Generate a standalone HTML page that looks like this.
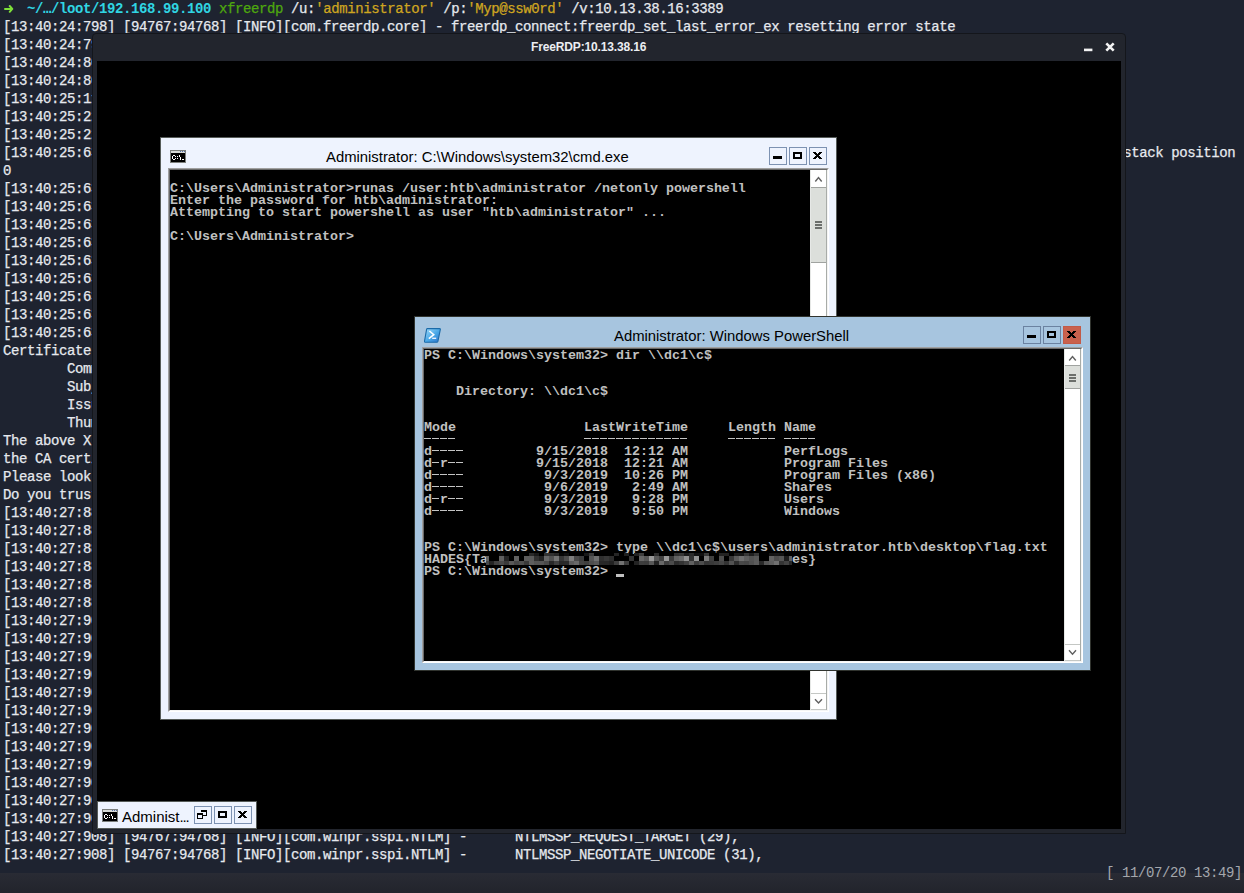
<!DOCTYPE html>
<html><head><meta charset="utf-8">
<style>
*{margin:0;padding:0;box-sizing:border-box}
html,body{width:1244px;height:893px;overflow:hidden;background:#1e2330}
body{position:relative;font-family:"Liberation Mono",monospace}
.a{position:absolute}
.tl{position:absolute;left:3px;height:18px;line-height:18px;font-size:14px;letter-spacing:-0.4px;color:#e6e9ee;white-space:pre;-webkit-text-stroke:0.25px currentColor}
.g{color:#7fd41f}.c{color:#30d5e3;font-weight:bold;-webkit-text-stroke:0}.gr{color:#4ea80e}.y{color:#cfa620}
#status{position:absolute;left:0;top:873px;width:1244px;height:20px;background:linear-gradient(#292b34,#22242c)}
#clock{position:absolute;left:1106px;top:864px;height:18px;line-height:18px;font-size:14px;letter-spacing:-0.4px;color:#a4a7ad;white-space:pre}
#rdp{position:absolute;left:92px;top:33px;width:1034px;height:801px;background:#22252d;border:1px solid #14161b;border-radius:4px 4px 0 0}
#rdptitle{position:absolute;left:0;top:0;width:100%;height:27px;font-family:"Liberation Sans",sans-serif;font-weight:bold;font-size:12px;color:#eceef2;text-align:center;line-height:27px}
#rdpcontent{position:absolute;left:97px;top:61px;width:1024px;height:768px;background:#000;overflow:hidden}
.win{position:absolute;border:1px solid #565b58}
.ttl{position:absolute;font-family:"Liberation Sans",sans-serif;font-size:14.85px;color:#000;white-space:pre;line-height:18px}
.btn{position:absolute;width:18px;height:18px;border:1px solid #7d92b2}
.cframe{position:absolute;border-top:1px solid #a0a0a0;border-left:1px solid #a0a0a0;border-right:1px solid #fff;border-bottom:1px solid #fff}
.cframe2{position:absolute;left:0;top:0;right:0;bottom:0;border-top:1px solid #696969;border-left:1px solid #696969;border-right:1px solid #f4f4f4;border-bottom:1px solid #f4f4f4}
.console{position:absolute;padding-top:1px;background:#000;color:#c0c0c0;font-family:"Liberation Mono",monospace;font-weight:bold;font-size:13.33px;line-height:12px;white-space:pre;overflow:hidden}
.sb{position:absolute;background:#fff;border-left:1px solid #e6e8e6;border-right:1px solid #a8aca8}
.sbb{position:absolute;left:0;width:15px;background:#fff}
.thumb{position:absolute;left:0;width:15px;background:#dcdfdb;border-top:1px solid #a0a3a0;border-bottom:1px solid #a0a3a0}
.mos i{position:absolute;display:block}
.d{color:transparent;display:inline-block;width:8px;height:12px;vertical-align:top;background:linear-gradient(#c4c4c4,#c4c4c4) 0 4px/7px 1px no-repeat}
</style></head><body>
<div class="tl" style="top:0px"><span class="g"> </span>  <span class="c">~/…/loot/192.168.99.100</span> <span class="gr">xfreerdp</span> /u:<span class="y">'administrator'</span> /p:<span class="y">'Myp@ssw0rd'</span> /v:10.13.38.16:3389</div>
<div class="tl" style="top:18px">[13:40:24:798] [94767:94768] [INFO][com.freerdp.core] - freerdp_connect:freerdp_set_last_error_ex resetting error state</div>
<div class="tl" style="top:36px">[13:40:24:799]</div>
<div class="tl" style="top:54px">[13:40:24:800]</div>
<div class="tl" style="top:72px">[13:40:24:800]</div>
<div class="tl" style="top:90px">[13:40:25:117]</div>
<div class="tl" style="top:108px">[13:40:25:228]</div>
<div class="tl" style="top:126px">[13:40:25:229]</div>
<div class="tl" style="top:144px">[13:40:25:636]                                                                                                                              stack position</div>
<div class="tl" style="top:162px">0</div>
<div class="tl" style="top:180px">[13:40:25:636]</div>
<div class="tl" style="top:198px">[13:40:25:636]</div>
<div class="tl" style="top:216px">[13:40:25:636]</div>
<div class="tl" style="top:234px">[13:40:25:636]</div>
<div class="tl" style="top:252px">[13:40:25:636]</div>
<div class="tl" style="top:270px">[13:40:25:636]</div>
<div class="tl" style="top:288px">[13:40:25:636]</div>
<div class="tl" style="top:306px">[13:40:25:636]</div>
<div class="tl" style="top:324px">[13:40:25:636]</div>
<div class="tl" style="top:342px">Certificate details for 10.13.38.16:3389 (RDP-Server):</div>
<div class="tl" style="top:360px">        Common Name: dc1.htb.local</div>
<div class="tl" style="top:378px">        Subject:     CN = dc1.htb.local</div>
<div class="tl" style="top:396px">        Issuer:      CN = dc1.htb.local</div>
<div class="tl" style="top:414px">        Thumbprint:  8a:1f</div>
<div class="tl" style="top:432px">The above X.509 certificate could not be verified</div>
<div class="tl" style="top:450px">the CA certificate in your certificate store</div>
<div class="tl" style="top:468px">Please look at the OpenSSL documentation</div>
<div class="tl" style="top:486px">Do you trust the above certificate? (Y/T/N) Y</div>
<div class="tl" style="top:504px">[13:40:27:884]</div>
<div class="tl" style="top:522px">[13:40:27:884]</div>
<div class="tl" style="top:540px">[13:40:27:884]</div>
<div class="tl" style="top:558px">[13:40:27:884]</div>
<div class="tl" style="top:576px">[13:40:27:884]</div>
<div class="tl" style="top:594px">[13:40:27:884]</div>
<div class="tl" style="top:612px">[13:40:27:907]</div>
<div class="tl" style="top:630px">[13:40:27:907]</div>
<div class="tl" style="top:648px">[13:40:27:907]</div>
<div class="tl" style="top:666px">[13:40:27:907]</div>
<div class="tl" style="top:684px">[13:40:27:907]</div>
<div class="tl" style="top:702px">[13:40:27:907]</div>
<div class="tl" style="top:720px">[13:40:27:907]</div>
<div class="tl" style="top:738px">[13:40:27:907]</div>
<div class="tl" style="top:756px">[13:40:27:907]</div>
<div class="tl" style="top:774px">[13:40:27:907]</div>
<div class="tl" style="top:792px">[13:40:27:907]</div>
<div class="tl" style="top:810px">[13:40:27:907]</div>
<div class="tl" style="top:828px">[13:40:27:908] [94767:94768] [INFO][com.winpr.sspi.NTLM] -      NTLMSSP_REQUEST_TARGET (29),</div>
<div class="tl" style="top:846px">[13:40:27:908] [94767:94768] [INFO][com.winpr.sspi.NTLM] -      NTLMSSP_NEGOTIATE_UNICODE (31),</div>
<div id="status"></div>
<svg class="a" style="left:0;top:0" width="20" height="18" viewBox="0 0 20 18"><path d="M5 8.9H11.5M9.7 6L12.3 8.9L9.7 11.8" fill="none" stroke="#7ee03a" stroke-width="2" stroke-linecap="round" stroke-linejoin="round"/></svg>
<div id="clock">[ 11/07/20 13:49]</div>

<div id="rdp"></div><div class="a" style="left:531px;top:34px;height:27px;line-height:27px;font-family:'Liberation Sans',sans-serif;font-weight:bold;font-size:12px;letter-spacing:-0.15px;color:#eceef2;white-space:pre">FreeRDP:10.13.38.16</div>
<svg class="a" style="left:1080px;top:44px" width="16" height="10"><rect x="4" y="4.6" width="8.4" height="2.6" fill="#f2f2f2"/></svg>
<svg class="a" style="left:1105px;top:42px" width="10" height="10" viewBox="0 0 10 10"><path d="M1.3 1.3L8.7 8.7M8.7 1.3L1.3 8.7" stroke="#f2f2f2" stroke-width="2.6"/></svg>
<div id="rdpcontent"></div>

<!-- CMD window -->
<div class="win" style="left:160px;top:137px;width:677px;height:583px;background:#eef3fe"></div>
<svg class="a" style="left:170px;top:150px" width="16" height="13" viewBox="0 0 16 13" shape-rendering="crispEdges"><rect x="0" y="0" width="16" height="13" fill="#7c7f7c"/><rect x="1" y="1" width="14" height="2" fill="#d6d9d6"/><rect x="10" y="1" width="1" height="1" fill="#5570a8"/><rect x="12" y="1" width="1" height="1" fill="#5570a8"/><rect x="14" y="1" width="1" height="1" fill="#5570a8"/><rect x="1" y="3" width="14" height="9" fill="#000"/><g fill="#fff"><rect x="3" y="5" width="1" height="1"/><rect x="4" y="5" width="1" height="1"/><rect x="2" y="6" width="1" height="1"/><rect x="5" y="6" width="1" height="1"/><rect x="2" y="7" width="1" height="1"/><rect x="2" y="8" width="1" height="1"/><rect x="5" y="8" width="1" height="1"/><rect x="3" y="9" width="1" height="1"/><rect x="4" y="9" width="1" height="1"/><rect x="7" y="6" width="1" height="1"/><rect x="7" y="8" width="1" height="1"/><rect x="9" y="5" width="1" height="1"/><rect x="9" y="6" width="1" height="1"/><rect x="10" y="7" width="1" height="1"/><rect x="10" y="8" width="1" height="1"/><rect x="10" y="9" width="1" height="1"/><rect x="12" y="9" width="1" height="1"/><rect x="13" y="9" width="1" height="1"/></g></svg>
<div class="ttl" style="left:326px;top:148px">Administrator: C:\Windows\system32\cmd.exe</div>
<div class="btn" style="left:769px;top:147px"></div>
<div class="btn" style="left:789px;top:147px"></div>
<div class="btn" style="left:809px;top:147px"></div>
<div class="a" style="left:773px;top:156px;width:9px;height:3px;background:#000"></div>
<div class="a" style="left:793px;top:152px;width:9px;height:7px;border:2px solid #000"></div>
<svg class="a" style="left:813px;top:152px" width="9" height="7" viewBox="0 0 9 7" shape-rendering="crispEdges"><g fill="#000"><rect x="0" y="0" width="3" height="1"/><rect x="6" y="0" width="3" height="1"/><rect x="1" y="1" width="3" height="1"/><rect x="5" y="1" width="3" height="1"/><rect x="2" y="2" width="5" height="1"/><rect x="3" y="3" width="3" height="1"/><rect x="2" y="4" width="5" height="1"/><rect x="1" y="5" width="3" height="1"/><rect x="5" y="5" width="3" height="1"/><rect x="0" y="6" width="3" height="1"/><rect x="6" y="6" width="3" height="1"/></g></svg>
<div class="cframe" style="left:168px;top:168px;width:661px;height:544px"><div class="cframe2"></div></div>
<div class="console" style="left:170px;top:170px;width:640px;height:540px">
C:\Users\Administrator&gt;runas /user:htb\administrator /netonly powershell
Enter the password for htb\administrator:
Attempting to start powershell as user &quot;htb\administrator&quot; ...

C:\Users\Administrator&gt;</div>
<div class="sb" style="left:810px;top:170px;width:17px;height:540px">
  <div class="sbb" style="top:0;height:16px"></div>
  <div class="thumb" style="top:17px;height:76px"></div>
  <div class="sbb" style="top:523px;height:17px;border-top:1px solid #c4c7c4;border-bottom:1px solid #c4c7c4"></div>
</div>
<svg class="a" style="left:0;top:0" width="1244" height="893"><path d="M815.3 181.5 L818.5 177.5 L821.7 181.5" fill="none" stroke="#606060" stroke-width="1.4"/><path d="M815 699.2 L818.5 703 L822 699.2" fill="none" stroke="#606060" stroke-width="1.4"/></svg><div class="a" style="left:815px;top:221px;width:7px;height:2px;background:#6c6f6c"></div><div class="a" style="left:815px;top:224px;width:7px;height:2px;background:#6c6f6c"></div><div class="a" style="left:815px;top:227px;width:7px;height:2px;background:#6c6f6c"></div>

<!-- PS window -->
<div class="win" style="left:414px;top:316px;width:677px;height:355px;background:#a7c5df;border-color:#30332e"></div>
<svg class="a" style="left:424px;top:328px" width="17" height="15" viewBox="0 0 17 15"><defs><linearGradient id="pg" x1="0" y1="0" x2="1" y2="1"><stop offset="0" stop-color="#a6defa"/><stop offset="0.55" stop-color="#47a6e6"/><stop offset="1" stop-color="#2a6fc8"/></linearGradient></defs><path d="M3.2 0.6 H15.6 Q16.6 0.6 16.3 1.6 L13.9 13.4 Q13.7 14.2 12.8 14.2 H1.2 Q0.2 14.2 0.5 13.2 L2.6 1.4 Q2.8 0.6 3.2 0.6Z" fill="url(#pg)" stroke="#1b6aa8" stroke-width="1.1"/><path d="M5.4 3 L9.8 6.7 L4.8 10.6" fill="none" stroke="#fff" stroke-width="1.5"/><rect x="8.2" y="9.6" width="4" height="1.4" fill="#e8f2ff"/></svg>
<div class="ttl" style="left:614px;top:327px">Administrator: Windows PowerShell</div>
<div class="btn" style="left:1023px;top:326px;border-color:#6b82a0"></div>
<div class="btn" style="left:1043px;top:326px;border-color:#6b82a0"></div>
<div class="a" style="left:1063px;top:326px;width:18px;height:18px;background:#c9614d;border:1px solid #c25a47"></div>
<div class="a" style="left:1027px;top:335px;width:9px;height:3px;background:#000"></div>
<div class="a" style="left:1047px;top:331px;width:9px;height:7px;border:2px solid #000"></div>
<svg class="a" style="left:1067px;top:331px" width="9" height="7" viewBox="0 0 9 7" shape-rendering="crispEdges"><g fill="#000"><rect x="0" y="0" width="3" height="1"/><rect x="6" y="0" width="3" height="1"/><rect x="1" y="1" width="3" height="1"/><rect x="5" y="1" width="3" height="1"/><rect x="2" y="2" width="5" height="1"/><rect x="3" y="3" width="3" height="1"/><rect x="2" y="4" width="5" height="1"/><rect x="1" y="5" width="3" height="1"/><rect x="5" y="5" width="3" height="1"/><rect x="0" y="6" width="3" height="1"/><rect x="6" y="6" width="3" height="1"/></g></svg>
<div class="cframe" style="left:422px;top:347px;width:661px;height:316px"><div class="cframe2"></div></div>
<div class="console" style="left:424px;top:349px;width:640px;height:312px">PS C:\Windows\system32&gt; dir \\dc1\c$


    Directory: \\dc1\c$


Mode                LastWriteTime     Length Name
<span class="d">-</span><span class="d">-</span><span class="d">-</span><span class="d">-</span>                <span class="d">-</span><span class="d">-</span><span class="d">-</span><span class="d">-</span><span class="d">-</span><span class="d">-</span><span class="d">-</span><span class="d">-</span><span class="d">-</span><span class="d">-</span><span class="d">-</span><span class="d">-</span><span class="d">-</span>     <span class="d">-</span><span class="d">-</span><span class="d">-</span><span class="d">-</span><span class="d">-</span><span class="d">-</span> <span class="d">-</span><span class="d">-</span><span class="d">-</span><span class="d">-</span>
d<span class="d">-</span><span class="d">-</span><span class="d">-</span><span class="d">-</span>         9/15/2018  12:12 AM            PerfLogs
d<span class="d">-</span>r<span class="d">-</span><span class="d">-</span>         9/15/2018  12:21 AM            Program Files
d<span class="d">-</span><span class="d">-</span><span class="d">-</span><span class="d">-</span>          9/3/2019  10:26 PM            Program Files (x86)
d<span class="d">-</span><span class="d">-</span><span class="d">-</span><span class="d">-</span>          9/6/2019   2:49 AM            Shares
d<span class="d">-</span>r<span class="d">-</span><span class="d">-</span>          9/3/2019   9:28 PM            Users
d<span class="d">-</span><span class="d">-</span><span class="d">-</span><span class="d">-</span>          9/3/2019   9:50 PM            Windows


PS C:\Windows\system32&gt; type \\dc1\c$\users\administrator.htb\desktop\flag.txt
HADES{Ta                                      es}
PS C:\Windows\system32&gt; </div>
<div class="a" style="left:616px;top:574px;width:8px;height:3px;background:#c0c0c0"></div>
<div class="sb" style="left:1064px;top:349px;width:17px;height:312px">
  <div class="sbb" style="top:0;height:16px"></div>
  <div class="thumb" style="top:16px;height:24px"></div>
  <div class="sbb" style="top:295px;height:17px;border-top:1px solid #c4c7c4;border-bottom:1px solid #c4c7c4"></div>
</div>
<svg class="a" style="left:0;top:0" width="1244" height="893"><path d="M1069.2 360.5 L1072.5 356.5 L1075.8 360.5" fill="none" stroke="#606060" stroke-width="1.4"/><path d="M1069 650.2 L1072.5 654.2 L1076 650.2" fill="none" stroke="#606060" stroke-width="1.4"/></svg><div class="a" style="left:1069px;top:374px;width:7px;height:2px;background:#6c6f6c"></div><div class="a" style="left:1069px;top:377px;width:7px;height:2px;background:#6c6f6c"></div><div class="a" style="left:1069px;top:380px;width:7px;height:2px;background:#6c6f6c"></div>
<div class="mos"><i style="left:486px;top:556px;width:3px;height:5px;background:rgb(98,98,98)"></i><i style="left:486px;top:561px;width:3px;height:4px;background:rgb(70,70,70)"></i><i style="left:489px;top:561px;width:5px;height:4px;background:rgb(36,36,36)"></i><i style="left:494px;top:561px;width:5px;height:4px;background:rgb(65,65,65)"></i><i style="left:499px;top:553px;width:5px;height:3px;background:rgb(16,16,16)"></i><i style="left:499px;top:556px;width:5px;height:5px;background:rgb(96,96,96)"></i><i style="left:499px;top:561px;width:5px;height:4px;background:rgb(73,73,73)"></i><i style="left:504px;top:556px;width:5px;height:5px;background:rgb(36,36,36)"></i><i style="left:504px;top:561px;width:5px;height:4px;background:rgb(58,58,58)"></i><i style="left:509px;top:561px;width:5px;height:4px;background:rgb(89,89,89)"></i><i style="left:514px;top:556px;width:5px;height:5px;background:rgb(97,97,97)"></i><i style="left:514px;top:561px;width:5px;height:4px;background:rgb(71,71,71)"></i><i style="left:519px;top:561px;width:5px;height:4px;background:rgb(79,79,79)"></i><i style="left:524px;top:556px;width:5px;height:5px;background:rgb(92,92,92)"></i><i style="left:524px;top:561px;width:5px;height:4px;background:rgb(58,58,58)"></i><i style="left:529px;top:553px;width:5px;height:3px;background:rgb(41,41,41)"></i><i style="left:529px;top:556px;width:5px;height:5px;background:rgb(91,91,91)"></i><i style="left:529px;top:561px;width:5px;height:4px;background:rgb(94,94,94)"></i><i style="left:534px;top:553px;width:5px;height:3px;background:rgb(25,25,25)"></i><i style="left:534px;top:556px;width:5px;height:5px;background:rgb(49,49,49)"></i><i style="left:534px;top:561px;width:5px;height:4px;background:rgb(84,84,84)"></i><i style="left:539px;top:556px;width:5px;height:5px;background:rgb(34,34,34)"></i><i style="left:539px;top:561px;width:5px;height:4px;background:rgb(85,85,85)"></i><i style="left:544px;top:553px;width:5px;height:3px;background:rgb(51,51,51)"></i><i style="left:544px;top:556px;width:5px;height:5px;background:rgb(103,103,103)"></i><i style="left:544px;top:561px;width:5px;height:4px;background:rgb(73,73,73)"></i><i style="left:549px;top:553px;width:5px;height:3px;background:rgb(49,49,49)"></i><i style="left:549px;top:556px;width:5px;height:5px;background:rgb(83,83,83)"></i><i style="left:549px;top:561px;width:5px;height:4px;background:rgb(40,40,40)"></i><i style="left:554px;top:553px;width:5px;height:3px;background:rgb(39,39,39)"></i><i style="left:554px;top:556px;width:5px;height:5px;background:rgb(117,117,117)"></i><i style="left:554px;top:561px;width:5px;height:4px;background:rgb(63,63,63)"></i><i style="left:559px;top:553px;width:5px;height:3px;background:rgb(7,7,7)"></i><i style="left:559px;top:556px;width:5px;height:5px;background:rgb(55,55,55)"></i><i style="left:559px;top:561px;width:5px;height:4px;background:rgb(40,40,40)"></i><i style="left:564px;top:553px;width:5px;height:3px;background:rgb(16,16,16)"></i><i style="left:564px;top:556px;width:5px;height:5px;background:rgb(77,77,77)"></i><i style="left:564px;top:561px;width:5px;height:4px;background:rgb(42,42,42)"></i><i style="left:569px;top:556px;width:5px;height:5px;background:rgb(126,126,126)"></i><i style="left:569px;top:561px;width:5px;height:4px;background:rgb(93,93,93)"></i><i style="left:574px;top:556px;width:5px;height:5px;background:rgb(74,74,74)"></i><i style="left:574px;top:561px;width:5px;height:4px;background:rgb(105,105,105)"></i><i style="left:579px;top:556px;width:5px;height:5px;background:rgb(62,62,62)"></i><i style="left:579px;top:561px;width:5px;height:4px;background:rgb(68,68,68)"></i><i style="left:584px;top:553px;width:5px;height:3px;background:rgb(24,24,24)"></i><i style="left:584px;top:561px;width:5px;height:4px;background:rgb(62,62,62)"></i><i style="left:589px;top:553px;width:5px;height:3px;background:rgb(58,58,58)"></i><i style="left:589px;top:556px;width:5px;height:5px;background:rgb(86,86,86)"></i><i style="left:589px;top:561px;width:5px;height:4px;background:rgb(78,78,78)"></i><i style="left:594px;top:556px;width:5px;height:5px;background:rgb(112,112,112)"></i><i style="left:594px;top:561px;width:5px;height:4px;background:rgb(87,87,87)"></i><i style="left:599px;top:556px;width:5px;height:5px;background:rgb(47,47,47)"></i><i style="left:599px;top:561px;width:5px;height:4px;background:rgb(40,40,40)"></i><i style="left:604px;top:556px;width:5px;height:5px;background:rgb(55,55,55)"></i><i style="left:604px;top:561px;width:5px;height:4px;background:rgb(39,39,39)"></i><i style="left:609px;top:556px;width:5px;height:5px;background:rgb(46,46,46)"></i><i style="left:609px;top:561px;width:5px;height:4px;background:rgb(34,34,34)"></i><i style="left:614px;top:553px;width:5px;height:3px;background:rgb(37,37,37)"></i><i style="left:614px;top:561px;width:5px;height:4px;background:rgb(61,61,61)"></i><i style="left:619px;top:561px;width:5px;height:4px;background:rgb(114,114,114)"></i><i style="left:624px;top:553px;width:5px;height:3px;background:rgb(32,32,32)"></i><i style="left:624px;top:561px;width:5px;height:4px;background:rgb(61,61,61)"></i><i style="left:629px;top:556px;width:5px;height:5px;background:rgb(54,54,54)"></i><i style="left:634px;top:553px;width:5px;height:3px;background:rgb(34,34,34)"></i><i style="left:634px;top:561px;width:5px;height:4px;background:rgb(35,35,35)"></i><i style="left:639px;top:553px;width:5px;height:3px;background:rgb(62,62,62)"></i><i style="left:639px;top:556px;width:5px;height:5px;background:rgb(103,103,103)"></i><i style="left:639px;top:561px;width:5px;height:4px;background:rgb(62,62,62)"></i><i style="left:644px;top:556px;width:5px;height:5px;background:rgb(88,88,88)"></i><i style="left:644px;top:561px;width:5px;height:4px;background:rgb(60,60,60)"></i><i style="left:649px;top:556px;width:5px;height:5px;background:rgb(151,151,151)"></i><i style="left:649px;top:561px;width:5px;height:4px;background:rgb(88,88,88)"></i><i style="left:654px;top:553px;width:5px;height:3px;background:rgb(43,43,43)"></i><i style="left:654px;top:556px;width:5px;height:5px;background:rgb(87,87,87)"></i><i style="left:654px;top:561px;width:5px;height:4px;background:rgb(35,35,35)"></i><i style="left:659px;top:556px;width:5px;height:5px;background:rgb(65,65,65)"></i><i style="left:659px;top:561px;width:5px;height:4px;background:rgb(104,104,104)"></i><i style="left:664px;top:556px;width:5px;height:5px;background:rgb(152,152,152)"></i><i style="left:664px;top:561px;width:5px;height:4px;background:rgb(62,62,62)"></i><i style="left:669px;top:556px;width:5px;height:5px;background:rgb(59,59,59)"></i><i style="left:669px;top:561px;width:5px;height:4px;background:rgb(75,75,75)"></i><i style="left:674px;top:553px;width:5px;height:3px;background:rgb(49,49,49)"></i><i style="left:674px;top:556px;width:5px;height:5px;background:rgb(98,98,98)"></i><i style="left:674px;top:561px;width:5px;height:4px;background:rgb(43,43,43)"></i><i style="left:679px;top:553px;width:5px;height:3px;background:rgb(54,54,54)"></i><i style="left:679px;top:556px;width:5px;height:5px;background:rgb(108,108,108)"></i><i style="left:679px;top:561px;width:5px;height:4px;background:rgb(51,51,51)"></i><i style="left:684px;top:553px;width:5px;height:3px;background:rgb(27,27,27)"></i><i style="left:684px;top:556px;width:5px;height:5px;background:rgb(146,146,146)"></i><i style="left:684px;top:561px;width:5px;height:4px;background:rgb(64,64,64)"></i><i style="left:689px;top:553px;width:5px;height:3px;background:rgb(42,42,42)"></i><i style="left:689px;top:556px;width:5px;height:5px;background:rgb(50,50,50)"></i><i style="left:689px;top:561px;width:5px;height:4px;background:rgb(97,97,97)"></i><i style="left:694px;top:553px;width:5px;height:3px;background:rgb(17,17,17)"></i><i style="left:694px;top:556px;width:5px;height:5px;background:rgb(149,149,149)"></i><i style="left:694px;top:561px;width:5px;height:4px;background:rgb(61,61,61)"></i><i style="left:699px;top:553px;width:5px;height:3px;background:rgb(16,16,16)"></i><i style="left:699px;top:561px;width:5px;height:4px;background:rgb(77,77,77)"></i><i style="left:704px;top:553px;width:5px;height:3px;background:rgb(56,56,56)"></i><i style="left:704px;top:556px;width:5px;height:5px;background:rgb(124,124,124)"></i><i style="left:704px;top:561px;width:5px;height:4px;background:rgb(53,53,53)"></i><i style="left:709px;top:556px;width:5px;height:5px;background:rgb(63,63,63)"></i><i style="left:709px;top:561px;width:5px;height:4px;background:rgb(56,56,56)"></i><i style="left:714px;top:561px;width:5px;height:4px;background:rgb(61,61,61)"></i><i style="left:719px;top:553px;width:5px;height:3px;background:rgb(36,36,36)"></i><i style="left:719px;top:556px;width:5px;height:5px;background:rgb(79,79,79)"></i><i style="left:719px;top:561px;width:5px;height:4px;background:rgb(69,69,69)"></i><i style="left:724px;top:553px;width:5px;height:3px;background:rgb(34,34,34)"></i><i style="left:724px;top:561px;width:5px;height:4px;background:rgb(51,51,51)"></i><i style="left:729px;top:556px;width:5px;height:5px;background:rgb(56,56,56)"></i><i style="left:729px;top:561px;width:5px;height:4px;background:rgb(82,82,82)"></i><i style="left:734px;top:553px;width:5px;height:3px;background:rgb(26,26,26)"></i><i style="left:734px;top:556px;width:5px;height:5px;background:rgb(90,90,90)"></i><i style="left:734px;top:561px;width:5px;height:4px;background:rgb(45,45,45)"></i><i style="left:739px;top:553px;width:5px;height:3px;background:rgb(23,23,23)"></i><i style="left:739px;top:556px;width:5px;height:5px;background:rgb(111,111,111)"></i><i style="left:739px;top:561px;width:5px;height:4px;background:rgb(72,72,72)"></i><i style="left:744px;top:553px;width:5px;height:3px;background:rgb(54,54,54)"></i><i style="left:744px;top:556px;width:5px;height:5px;background:rgb(95,95,95)"></i><i style="left:744px;top:561px;width:5px;height:4px;background:rgb(69,69,69)"></i><i style="left:749px;top:553px;width:5px;height:3px;background:rgb(31,31,31)"></i><i style="left:749px;top:556px;width:5px;height:5px;background:rgb(83,83,83)"></i><i style="left:749px;top:561px;width:5px;height:4px;background:rgb(80,80,80)"></i><i style="left:754px;top:553px;width:5px;height:3px;background:rgb(57,57,57)"></i><i style="left:754px;top:556px;width:5px;height:5px;background:rgb(90,90,90)"></i><i style="left:754px;top:561px;width:5px;height:4px;background:rgb(91,91,91)"></i><i style="left:759px;top:561px;width:5px;height:4px;background:rgb(41,41,41)"></i><i style="left:764px;top:561px;width:5px;height:4px;background:rgb(86,86,86)"></i><i style="left:769px;top:553px;width:5px;height:3px;background:rgb(18,18,18)"></i><i style="left:769px;top:556px;width:5px;height:5px;background:rgb(99,99,99)"></i><i style="left:769px;top:561px;width:5px;height:4px;background:rgb(95,95,95)"></i><i style="left:774px;top:553px;width:5px;height:3px;background:rgb(22,22,22)"></i><i style="left:774px;top:556px;width:5px;height:5px;background:rgb(77,77,77)"></i><i style="left:774px;top:561px;width:5px;height:4px;background:rgb(112,112,112)"></i><i style="left:779px;top:553px;width:5px;height:3px;background:rgb(18,18,18)"></i><i style="left:779px;top:556px;width:5px;height:5px;background:rgb(86,86,86)"></i><i style="left:779px;top:561px;width:5px;height:4px;background:rgb(52,52,52)"></i><i style="left:784px;top:556px;width:5px;height:5px;background:rgb(28,28,28)"></i><i style="left:784px;top:561px;width:5px;height:4px;background:rgb(66,66,66)"></i><i style="left:789px;top:556px;width:3px;height:5px;background:rgb(96,96,96)"></i><i style="left:789px;top:561px;width:3px;height:4px;background:rgb(40,40,40)"></i></div>

<!-- minimized -->
<div class="win" style="left:97px;top:801px;width:160px;height:28px;background:#eef3fe"></div>
<svg class="a" style="left:102px;top:809px" width="16" height="13" viewBox="0 0 16 13" shape-rendering="crispEdges"><rect x="0" y="0" width="16" height="13" fill="#7c7f7c"/><rect x="1" y="1" width="14" height="2" fill="#d6d9d6"/><rect x="10" y="1" width="1" height="1" fill="#5570a8"/><rect x="12" y="1" width="1" height="1" fill="#5570a8"/><rect x="14" y="1" width="1" height="1" fill="#5570a8"/><rect x="1" y="3" width="14" height="9" fill="#000"/><g fill="#fff"><rect x="3" y="5" width="1" height="1"/><rect x="4" y="5" width="1" height="1"/><rect x="2" y="6" width="1" height="1"/><rect x="5" y="6" width="1" height="1"/><rect x="2" y="7" width="1" height="1"/><rect x="2" y="8" width="1" height="1"/><rect x="5" y="8" width="1" height="1"/><rect x="3" y="9" width="1" height="1"/><rect x="4" y="9" width="1" height="1"/><rect x="7" y="6" width="1" height="1"/><rect x="7" y="8" width="1" height="1"/><rect x="9" y="5" width="1" height="1"/><rect x="9" y="6" width="1" height="1"/><rect x="10" y="7" width="1" height="1"/><rect x="10" y="8" width="1" height="1"/><rect x="10" y="9" width="1" height="1"/><rect x="12" y="9" width="1" height="1"/><rect x="13" y="9" width="1" height="1"/></g></svg>
<div class="ttl" style="left:122px;top:808px;font-size:15px">Administ<span style="letter-spacing:-1.2px">...</span></div>
<div class="btn" style="left:194px;top:806px"></div>
<div class="btn" style="left:214px;top:806px"></div>
<div class="btn" style="left:234px;top:806px"></div>
<div class="a" style="left:201px;top:810px;width:6px;height:6px;border-top:2px solid #000;border-right:1px solid #000;border-bottom:1px solid #000"></div>
<div class="a" style="left:197px;top:813px;width:6px;height:6px;border:1px solid #000;border-top-width:2px;background:#eef3fe"></div>
<div class="a" style="left:218px;top:811px;width:9px;height:7px;border:2px solid #000"></div>
<svg class="a" style="left:238px;top:811px" width="9" height="7" viewBox="0 0 9 7" shape-rendering="crispEdges"><g fill="#000"><rect x="0" y="0" width="3" height="1"/><rect x="6" y="0" width="3" height="1"/><rect x="1" y="1" width="3" height="1"/><rect x="5" y="1" width="3" height="1"/><rect x="2" y="2" width="5" height="1"/><rect x="3" y="3" width="3" height="1"/><rect x="2" y="4" width="5" height="1"/><rect x="1" y="5" width="3" height="1"/><rect x="5" y="5" width="3" height="1"/><rect x="0" y="6" width="3" height="1"/><rect x="6" y="6" width="3" height="1"/></g></svg>
</body></html>
